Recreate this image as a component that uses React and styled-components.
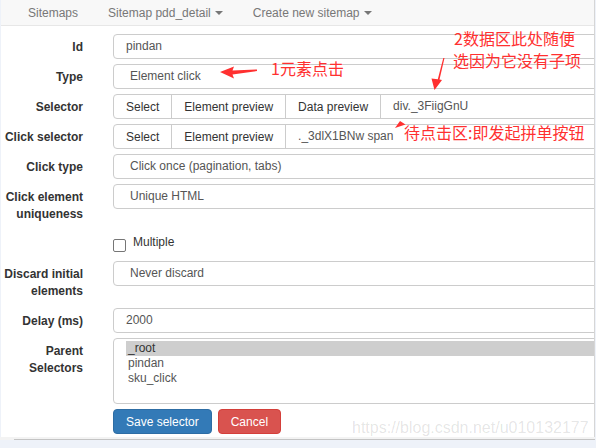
import React from "react";
import styled, { createGlobalStyle } from "styled-components";

const GlobalStyle = createGlobalStyle`
  html, body { margin: 0; padding: 0; background: #eef2f9; }
  body { font-family: "Liberation Sans", Arial, sans-serif; font-size: 12px; }
  * { box-sizing: border-box; }
`;

const Page = styled.div`
  position: relative;
  margin-left: 1px;
  width: 594px;
  height: 437px;
  background: #fff;
  border-right: 1px solid #d6d6d6;
  overflow: hidden;
`;

const BottomEdge = styled.div`
  width: 595px;
  height: 3px;
  background: #f3f3f3;
  padding: 2px 0 0 14px;
`;

const ScrollLine = styled.div`
  height: 1px;
  background: #c4c4c4;
`;

const Nav = styled.nav`
  display: flex;
  height: 26px;
  padding-left: 12px;
  background: #f8f8f8;
  border-bottom: 1px solid #e7e7e7;
`;

const NavItem = styled.a`
  display: flex;
  align-items: center;
  padding: 0 15px;
  height: 25px;
  color: #777;
  font-size: 12px;
  text-decoration: none;
`;

const Caret = styled.span`
  display: inline-block;
  width: 0;
  height: 0;
  margin-left: 4px;
  margin-top: 1px;
  border-top: 4px solid #777;
  border-left: 4px solid transparent;
  border-right: 4px solid transparent;
`;

const Form = styled.form`
  display: flex;
  flex-direction: column;
  gap: 5px;
  padding-top: 8px;
  margin-right: -20px;
`;

const Row = styled.div`
  display: grid;
  grid-template-columns: 82px 1fr;
  column-gap: 30px;
  align-items: start;
`;

const Label = styled.label`
  text-align: right;
  font-weight: bold;
  color: #333;
  font-size: 12px;
  line-height: 17px;
  padding: 5px 0 3px;
`;

const Field = styled.div`
  height: 25px;
  flex: 1;
  border: 1px solid #ccc;
  border-radius: ${(p) => (p.$attached ? "0" : "4px")};
  margin-left: ${(p) => (p.$attached ? "-1px" : "0")};
  padding-left: ${(p) => (p.$select ? "16px" : "12px")};
  line-height: 23px;
  color: #555;
  font-size: 12px;
  white-space: nowrap;
  overflow: hidden;
  background: #fff;
`;

const Group = styled.div`
  display: flex;
  height: 25px;
`;

const GroupButton = styled.button`
  height: 25px;
  padding: 0 12px;
  margin: 0 0 0 -1px;
  border: 1px solid #ccc;
  border-radius: 0;
  background: #fff;
  color: #333;
  font-family: "Liberation Sans", Arial, sans-serif;
  font-size: 12px;
  white-space: nowrap;
  &:first-child {
    margin-left: 0;
    border-radius: 4px 0 0 4px;
  }
`;

const CheckRow = styled.label`
  display: flex;
  align-items: flex-start;
  padding: 3px 0 4px;
  color: #333;
  font-size: 12px;
  line-height: 17px;
`;

const CheckBox = styled.span`
  width: 13px;
  height: 13px;
  margin-top: 5px;
  margin-right: 7px;
  border: 1px solid #767676;
  border-radius: 2px;
  background: #fff;
`;

const ListBox = styled.div`
  height: 66px;
  border: 1px solid #ccc;
  border-radius: 4px;
  padding: 2px 0 0 12px;
  overflow: hidden;
`;

const Option = styled.div`
  height: 15px;
  line-height: 15px;
  padding-left: 2px;
  font-size: 12px;
  color: ${(p) => (p.$selected ? "#333" : "#555")};
  background: ${(p) => (p.$selected ? "#cecece" : "transparent")};
`;

const Actions = styled.div`
  display: flex;
  gap: 6px;
`;

const ActionButton = styled.button`
  height: 25px;
  padding: 0 12px;
  border-radius: 4px;
  border: 1px solid ${(p) => (p.$danger ? "#d43f3a" : "#2e6da4")};
  background: ${(p) => (p.$danger ? "#d9534f" : "#337ab7")};
  color: #fff;
  font-family: "Liberation Sans", Arial, sans-serif;
  font-size: 12px;
`;

const Note = styled.div`
  position: absolute;
  left: ${(p) => p.$x}px;
  top: ${(p) => p.$y}px;
  color: #ff3030;
  font-family: "Noto Sans CJK SC", "Liberation Sans", sans-serif;
  font-size: 16px;
  line-height: 21px;
  white-space: nowrap;
`;

const Watermark = styled.div`
  position: absolute;
  left: 351px;
  top: 419px;
  font-size: 16px;
  line-height: 18px;
  color: rgba(0, 0, 0, 0.11);
  white-space: nowrap;
`;

const Overlay = styled.svg`
  position: absolute;
  left: 0;
  top: 0;
  width: 594px;
  height: 437px;
  pointer-events: none;
`;

export default function App() {
  return (
    <>
      <GlobalStyle />
      <Page>
        <Nav>
          <NavItem>Sitemaps</NavItem>
          <NavItem>
            Sitemap pdd_detail<Caret />
          </NavItem>
          <NavItem>
            Create new sitemap<Caret />
          </NavItem>
        </Nav>
        <Form>
          <Row>
            <Label>Id</Label>
            <Field>pindan</Field>
          </Row>
          <Row>
            <Label>Type</Label>
            <Field $select>Element click</Field>
          </Row>
          <Row>
            <Label>Selector</Label>
            <Group>
              <GroupButton type="button">Select</GroupButton>
              <GroupButton type="button">Element preview</GroupButton>
              <GroupButton type="button">Data preview</GroupButton>
              <Field $attached>div._3FiigGnU</Field>
            </Group>
          </Row>
          <Row>
            <Label>Click selector</Label>
            <Group>
              <GroupButton type="button">Select</GroupButton>
              <GroupButton type="button">Element preview</GroupButton>
              <Field $attached>._3dlX1BNw span</Field>
            </Group>
          </Row>
          <Row>
            <Label>Click type</Label>
            <Field $select>Click once (pagination, tabs)</Field>
          </Row>
          <Row>
            <Label>Click element uniqueness</Label>
            <Field $select>Unique HTML</Field>
          </Row>
          <Row>
            <span />
            <CheckRow>
              <CheckBox />
              Multiple
            </CheckRow>
          </Row>
          <Row>
            <Label>Discard initial elements</Label>
            <Field $select>Never discard</Field>
          </Row>
          <Row>
            <Label>Delay (ms)</Label>
            <Field>2000</Field>
          </Row>
          <Row>
            <Label>Parent Selectors</Label>
            <ListBox>
              <Option $selected>_root</Option>
              <Option>pindan</Option>
              <Option>sku_click</Option>
            </ListBox>
          </Row>
          <Row>
            <span />
            <Actions>
              <ActionButton type="button">Save selector</ActionButton>
              <ActionButton type="button" $danger>
                Cancel
              </ActionButton>
            </Actions>
          </Row>
        </Form>
        <Watermark>https://blog.csdn.net/u010132177</Watermark>
        <Note $x={270} $y={58}>1元素点击</Note>
        <Note $x={453} $y={28}>2数据区此处随便</Note>
        <Note $x={452} $y={50}>选因为它没有子项</Note>
        <Note $x={403} $y={122}>待点击区:即发起拼单按钮</Note>
        <Overlay viewBox="0 0 594 437">
          <polygon
            fill="#ff3030"
            points="219,72 233,66.5 231.5,70.5 256,69.5 256,71 231.5,74.5 233,78.5"
          />
          <polygon
            fill="#ff3030"
            points="443.5,58 438.5,79.5 441,80 433.5,90 430.5,78.5 436.8,79.2 442.3,58"
          />
          <polygon fill="#ff3030" points="394,128 399,121 404.5,124.5" />
        </Overlay>
      </Page>
      <BottomEdge>
        <ScrollLine />
      </BottomEdge>
    </>
  );
}
